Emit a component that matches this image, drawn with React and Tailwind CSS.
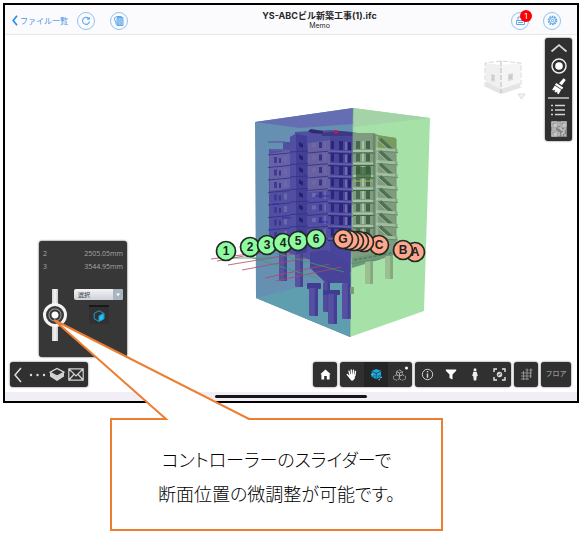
import React from "react";

const stories = [0, 1, 2, 3, 4, 5, 6, 7];

const gridMarkers = [
  { label: "1", x: 226, y: 251, color: "#8dfca0" },
  { label: "2", x: 250, y: 247, color: "#8dfca0" },
  { label: "3", x: 267, y: 245, color: "#8dfca0" },
  { label: "4", x: 283, y: 243, color: "#8dfca0" },
  { label: "5", x: 298, y: 241, color: "#8dfca0" },
  { label: "6", x: 316, y: 239, color: "#8dfca0" },
  { label: "A", x: 415, y: 252, color: "#ffa68c" },
  { label: "B", x: 403, y: 250, color: "#ffa68c" },
  { label: "C", x: 379, y: 245, color: "#ffa68c" },
  { label: "", x: 364, y: 242, color: "#ffa68c" },
  { label: "", x: 359, y: 241, color: "#ffa68c" },
  { label: "", x: 354, y: 241, color: "#ffa68c" },
  { label: "", x: 349, y: 240, color: "#ffa68c" },
  { label: "G", x: 343, y: 239, color: "#ffa68c" },
];

function Pile({ x, top, bottom, w, fill, side }) {
  return (
    <g>
      <rect x={x} y={top} width={w} height={bottom - top} rx="1.5" fill={fill} />
      <rect x={x + w * 0.65} y={top} width={w * 0.35} height={bottom - top} rx="1" fill={side} />
    </g>
  );
}

function Model() {
  return (
    <svg
      className="absolute inset-0 h-full w-full"
      viewBox="5 35 572 357"
      role="img"
      aria-label="建物モデル"
    >
      {/* section box, left face */}
      <polygon points="255,122 353,108 350,337 256,298" fill="#6690b2" />
      <polygon points="255,122 353,108 353,124 300,128" fill="#666eb3" />
      <polygon points="256,298 300,287 351,276 350,337" fill="#5f9eae" />
      {/* section box, right face */}
      <polygon points="353,108 430,118 424,311 350,337" fill="#a6e2a8" />
      <polygon points="353,108 430,118 353,127" fill="#a5d3a8" />

      {/* left wing */}
      <polygon points="283,142 290,142 290,137 295,134 295,132 331,130 353,132 351,272 330,266 285,252 269,247 269,149 283,149" fill="#504fa1" />
      <path d="M268 142h17M270 150h17M269 157h15" stroke="#5863a4" strokeWidth="1.6" />
      <polygon points="269,154 290,150 290,188 270,191" fill="#6762a8" />
      <polygon points="296,134 307,136 307,252 296,255" fill="#423f94" />
      <polygon points="308,143 330,140 331,190 308,192" fill="#67619f" />
      <polygon points="330,134 353,134 351,265 330,262" fill="#48459b" />
      <path d="M308 131l3-2 12 2v3l-12-1z" fill="#302a72" />
      <path d="M322 133l17-2 19 2v3h-36z" fill="#3d397f" />
      <circle cx="336" cy="132" r="2" fill="#b51d5c" />
      {stories.map((n) => {
        const y = 141 + n * 12.5;
        return (
          <g key={n}>
            <path d={`M268 ${y + 14}l22 -2M290 ${y + 11}l18 -1M307 ${y + 12}l24 -2`} stroke="#373187" strokeWidth="0.9" />
            <path d={`M328 ${y + 10}l25 1`} stroke="#6762aa" strokeWidth="1.4" />
            <path d={`M328 ${y + 12}l25 1`} stroke="#2b2879" strokeWidth="1" />
            <rect x="274" y={y + 16} width="3" height="6" fill="#403a92" />
            <rect x="284" y={y + 15} width="3" height="6" fill="#6c66aa" />
            <rect x="279" y={y + 17} width="2" height="5" fill="#39358b" />
            <path d={`M299 ${y + 1}l4 2v4l-4-2z`} fill="#242372" />
            <rect x="312" y={y + 2} width="4" height="4" fill="#6f67a8" />
            <rect x="319" y={y + 1} width="3" height="6" fill="#393187" />
            <rect x="324" y={y} width="2" height="8" fill="#6c66aa" />
            <rect x="331" y={y} width="3" height="8" fill="#2b2778" />
            <rect x="339" y={y} width="4" height="9" fill="#2b2778" />
            <rect x="345" y={y + 1} width="2" height="8" fill="#6f6aac" />
            <rect x="348" y={y + 1} width="3" height="8" fill="#25236f" />
          </g>
        );
      })}
      <path d="M315 196h15M318 222h10M282 218h9M272 204h7" stroke="#2e2cae" strokeWidth="1" />

      {/* right wing */}
      <polygon points="353,133 374,133 378,135 396,138 396,254 378,260 352,265" fill="#819b80" />
      <polygon points="375,135 396,138 396,149 376,149" fill="#799b5e" />
      {stories.map((n) => {
        const y = 141 + n * 12.5;
        return (
          <g key={n}>
            <rect x="356" y={y} width="4" height="8" fill="#476a55" />
            <rect x="362" y={y} width="2" height="8" fill="#a9c4a4" />
            <rect x="366" y={y} width="4" height="8" fill="#416448" />
            <path d={`M353 ${y + 10}h22`} stroke="#aac3a4" strokeWidth="2" />
            <path d={`M353 ${y + 12}h22`} stroke="#3c6544" strokeWidth="1" />
            <path d={`M380 ${y - 2}l12 11`} stroke="#4e7154" strokeWidth="3.5" />
            <path d={`M378 ${y - 1}l12 11`} stroke="#9bbc98" strokeWidth="1" />
            <path d={`M376 ${y + 8}l22 1.5`} stroke="#a2bd9e" strokeWidth="3" />
            <path d={`M376 ${y + 10}l22 1.5`} stroke="#668b69" strokeWidth="1" />
          </g>
        );
      })}
      <path d="M374 134v119" stroke="#5e826a" strokeWidth="1.5" />
      <path d="M377 136v118" stroke="#adc6ad" strokeWidth="1" />
      <path d="M396 139v112" stroke="#6f9471" strokeWidth="1" />
      <rect x="356" y="167" width="15" height="11" fill="#355e36" opacity="0.7" />
      <path d="M354 181h19" stroke="#a9b856" strokeWidth="1" />
      <polygon points="352,258 401,248 401,253 352,268" fill="#709778" />
      <path d="M354 260l38-7" stroke="#4d6e50" strokeDasharray="3 2" />

      {/* foundation */}
      <Pile x={365} top={261} bottom={284} w={8} fill="#9bbf93" side="#86a881" />
      <Pile x={385} top={256} bottom={279} w={8} fill="#9bbf93" side="#86a881" />
      <Pile x={279} top={252} bottom={281} w={8} fill="#5552a0" side="#464394" />
      <Pile x={295} top={254} bottom={287} w={8} fill="#5552a0" side="#464394" />
      <polygon points="310,252 326,250 350,263 351,283 326,283 310,268" fill="#474398" />
      <Pile x={323} top={282} bottom={312} w={7} fill="#504b9b" side="#423c8e" />
      <Pile x={342} top={283} bottom={319} w={9} fill="#5650a2" side="#443e94" />
      <rect x="307" y="283" width="14" height="6" rx="1" fill="#403c92" />
      <Pile x={309} top={288} bottom={316} w={9} fill="#5650a2" side="#443e94" />
      <rect x="323" y="290" width="17" height="5" rx="1" fill="#403c92" />
      <Pile x={328} top={294} bottom={324} w={9} fill="#5650a2" side="#443e94" />
      <rect x="350" y="287" width="4" height="7" fill="#789f78" />
      <path d="M353 108L350 337" stroke="#66869a" strokeWidth="0.6" />

      {/* grid lines */}
      <g fill="none" strokeWidth="0.8">
        <path d="M211 259l60-8M217 261l64-12M228 265l66-11M242 270l64-12M265 278l65-14M276 281l65-14" stroke="#b34564" />
        <path d="M233 258l38 0M247 256l70 22M275 253l69 19M350 264l30-5" stroke="#3f9a68" />
      </g>

      {gridMarkers.map((m) => (
        <g key={`${m.label}${m.x}`}>
          <circle cx={m.x} cy={m.y} r="9.5" fill={m.color} stroke="#202a22" strokeWidth="1.7" />
          <text
            x={m.x}
            y={m.y + 4}
            textAnchor="middle"
            className="fill-[#222222] font-['Liberation_Sans',sans-serif] text-[12px] font-bold"
          >
            {m.label}
          </text>
        </g>
      ))}
    </svg>
  );
}

function RoundButton({ label, children }) {
  return (
    <button
      type="button"
      aria-label={label}
      className="relative flex h-[18px] w-[18px] shrink-0 items-center justify-center rounded-full border border-[#8fc2ef] text-[#62a8e8]"
    >
      {children}
    </button>
  );
}

function Header() {
  return (
    <header className="flex h-[30px] items-center border-b border-[#e7e7ea] bg-[#fbfbfd] pt-[2px] pr-4 pl-[7px]">
      <a href="#files" className="flex items-center gap-[2px] text-[8px] leading-3 whitespace-nowrap text-[#4596e6]">
        <svg width="6" height="11" viewBox="0 0 6 11" fill="none" stroke="#2b8cee" strokeWidth="1.7">
          <path d="M5 0.8L1.2 5.5 5 10.2" />
        </svg>
        ファイル一覧
      </a>
      <div className="ml-[9px] flex gap-[15px]">
        <RoundButton label="再読み込み">
          <svg width="10" height="10" viewBox="0 0 10 10" fill="none" stroke="currentColor" strokeWidth="1.1">
            <path d="M7.7 2.6A3.5 3.5 0 1 0 8.5 5.4M8.3 0.9v2.3H6" />
          </svg>
        </RoundButton>
        <RoundButton label="図面">
          <svg width="12" height="12" viewBox="0 0 12 12" fill="none" stroke="currentColor">
            <path d="M4 2.5h6v8H4z" fill="#b4d7f6" />
            <path d="M3.5 9.8L1.2 3.2 3.5 1.5h5.2M5.8 3v7M8 3v7" />
          </svg>
        </RoundButton>
      </div>
      <div className="flex-1 text-center text-[#272729]">
        <h1 className="text-[9px] leading-[11px] font-bold">YS-ABCビル新築工事(1).ifc</h1>
        <p className="text-[7px] leading-[10px]">Memo</p>
      </div>
      <div className="flex gap-[14px]">
        <RoundButton label="通知 1件">
          <svg width="11" height="11" viewBox="0 0 11 11" fill="none" stroke="currentColor">
            <path d="M1.5 5.5h8v4h-8zM3 5V2h5v3M3 7.5h5" />
          </svg>
          <span className="absolute -top-[3px] left-[8px] flex h-[12px] w-[12px] items-center justify-center rounded-full bg-[#fb0007] text-[8px] leading-none text-white">
            1
          </span>
        </RoundButton>
        <RoundButton label="設定">
          <svg width="11" height="11" viewBox="0 0 11 11" fill="none" stroke="currentColor">
            <circle cx="5.5" cy="5.5" r="4" strokeWidth="1.6" strokeDasharray="1.7 0.8" />
            <circle cx="5.5" cy="5.5" r="3" />
            <circle cx="5.5" cy="5.5" r="1.2" />
          </svg>
        </RoundButton>
      </div>
    </header>
  );
}

function ViewCube() {
  return (
    <svg className="mt-[22px]" width="42" height="42" viewBox="0 0 42 42" role="img" aria-label="ビューキューブ">
      <path d="M1 3l16 2v29L2 27z" fill="#f0f0f0" />
      <path d="M17 5l20-2-1 25-19 6z" fill="#f5f5f5" />
      <path d="M2 22l15 7v5L2 27zM17 29l19-6v5l-19 6z" fill="#e4e4e4" />
      <g fill="none" stroke="#d8d8d8" strokeDasharray="5 2">
        <path d="M1 27V3l16-2 20 2v25" />
        <path d="M17 1v32" stroke="#bcbcbc" />
      </g>
      <path d="M7 14l4 1v7l-4-1zM24 14l5-1v7l-5 1z" fill="#d6dade" />
      <path d="M8 16h2M8 19h2M25 16h3M25 18h3" stroke="#b9bec4" />
      <path d="M34 34h7l-3.5 5z" fill="#f2f2f2" stroke="#dcdcdc" />
    </svg>
  );
}

const barStyle = "rounded-[3px] bg-[#303030] shadow-[0_0_2px_#555555]";

function SideTools() {
  return (
    <nav className={`flex w-[27px] flex-col items-center pt-[1px] pb-[3px] text-white ${barStyle}`} aria-label="表示ツール">
      <button type="button" aria-label="閉じる" className="flex h-[17px] items-center">
        <svg width="18" height="10" viewBox="0 0 18 10" fill="none" stroke="#d8d8d8" strokeWidth="1.7">
          <path d="M1.5 8.5L9 2l7.5 6.5" />
        </svg>
      </button>
      <button type="button" aria-label="記録" className="flex h-5 items-center">
        <svg width="18" height="18" viewBox="0 0 18 18" fill="none" stroke="#ededed">
          <circle cx="9" cy="9" r="7" strokeWidth="1.5" />
          <circle cx="9" cy="9" r="3.8" fill="#fff" stroke="none" />
        </svg>
      </button>
      <button type="button" aria-label="クリア" className="flex h-5 items-center">
        <svg width="16" height="18" viewBox="0 0 16 18" fill="#fff">
          <path d="M12.6 1.2l2.2 1.8-4 5.2L8 6.2zM5.2 6l7 4.6-1.2 1.8-7-4.6zM3.8 8.6l6.4 4.2L7.6 17.2l-1.6-1 .4-1.8-1.8 1-1.2-.8 1.2-1.8-2.2.8-1.2-.9z" />
        </svg>
      </button>
      <hr className="my-[1px] w-[21px] border-t-2 border-[#a4a4a4]" />
      <button type="button" aria-label="一覧" className="flex h-5 items-center">
        <svg width="15" height="12" viewBox="0 0 15 12" stroke="#d4d4d4" strokeWidth="1.4">
          <path d="M0 1.5h2M4 1.5h10M0 6h2M4 6h10M0 10.5h2M4 10.5h10" />
        </svg>
      </button>
      <button type="button" aria-label="QRコード" className="flex h-[18px] items-center">
        <svg width="16" height="16" viewBox="0 0 16 16">
          <path d="M0 0h16v16H0z" fill="#858585" />
          <path d="M1 1h5v5H1zM10 1h5v5h-5zM1 10h5v5H1z" fill="none" stroke="#cdcdcd" />
          <path d="M3 3h2v2H3zM12 3h2v2h-2zM3 12h2v2H3zM8 1v4M7 7h3v2h3v3h-2v3M13 8h2M8 11v4M1 8h4M13 14h2" fill="none" stroke="#dedede" />
        </svg>
      </button>
    </nav>
  );
}

function SectionPanel() {
  return (
    <section className="ml-[29px] w-[88px] rounded-[3px] bg-[#373737] px-1 pt-[6px] shadow-[0_0_2px_#333333]" aria-label="断面コントローラー">
      <dl className="font-['Open_Sans','Noto_Sans_CJK_JP',sans-serif] text-[7px] leading-[13px] text-[#a6a6a6]">
        <div className="flex justify-between">
          <dt>2</dt>
          <dd>2505.05mm</dd>
        </div>
        <div className="flex justify-between">
          <dt>3</dt>
          <dd>3544.95mm</dd>
        </div>
      </dl>
      <div className="flex h-[84px] items-start justify-between pt-[16px]">
        <input
          type="range"
          min="0"
          max="100"
          defaultValue="50"
          aria-label="断面位置"
          className="h-[52px] w-[24px] appearance-none bg-transparent [writing-mode:vertical-lr] [&::-webkit-slider-runnable-track]:h-full [&::-webkit-slider-runnable-track]:w-full [&::-webkit-slider-runnable-track]:bg-[linear-gradient(90deg,transparent_9px,#d2d2d2_9px,#f4f4f4_12px,#c9c9c9_15px,transparent_15px)] [&::-webkit-slider-thumb]:h-[24px] [&::-webkit-slider-thumb]:w-[24px] [&::-webkit-slider-thumb]:appearance-none [&::-webkit-slider-thumb]:rounded-full [&::-webkit-slider-thumb]:border-[3px] [&::-webkit-slider-thumb]:border-[#f4f4f4] [&::-webkit-slider-thumb]:bg-[radial-gradient(circle,#ffffff_3px,#373737_4px,#373737_5px,#9b9b9b_6px,#373737_7px)]"
        />
        <div className="flex flex-col items-center gap-[5px]">
          <div className="relative flex">
            <select
              aria-label="選択"
              className="h-[11px] w-[49px] appearance-none rounded-[2px] bg-linear-to-b from-[#f4f4f5] to-[#ced1d8] pl-[4px] text-[6px] leading-[11px] text-[#333333]"
            >
              <option>選択</option>
            </select>
            <svg className="pointer-events-none absolute top-0 right-0" width="10" height="11" viewBox="0 0 10 11">
              <path d="M0 0h8a2 2 0 0 1 2 2v7a2 2 0 0 1-2 2H0z" fill="#a9b4c1" />
              <path d="M3 4.5h4L5 7.2z" fill="#fff" />
            </svg>
          </div>
          <button type="button" aria-label="断面キューブ" className="flex h-[19px] w-5 items-center justify-center border-t-2 border-[#181818] bg-[#313131]">
            <svg width="12" height="12" viewBox="0 0 12 12" fill="none" stroke="#209ed0">
              <path d="M6 .8l4.8 2.6v5.4L6 11.3 1.2 8.8V3.4z" />
              <path d="M6 6l4.8-2.6v5.4L6 11.3z" fill="#1cc4fc" />
            </svg>
          </button>
        </div>
      </div>
    </section>
  );
}

function LeftBar() {
  return (
    <nav className={`flex h-[25px] w-[78px] items-center gap-[3px] pl-[3px] ${barStyle}`} aria-label="メモツール">
      <button type="button" aria-label="戻る">
        <svg width="10" height="18" viewBox="0 0 10 18" fill="none" stroke="#ddd" strokeWidth="1.5">
          <path d="M8 2L2 9l6 7" />
        </svg>
      </button>
      <button type="button" aria-label="その他" className="ml-[3px]">
        <svg width="17" height="4" viewBox="0 0 17 4" fill="#ddd">
          <circle cx="2" cy="2" r="1.2" />
          <circle cx="8.5" cy="2" r="1.2" />
          <circle cx="15" cy="2" r="1.2" />
        </svg>
      </button>
      <button type="button" aria-label="レイヤー">
        <svg width="16" height="15" viewBox="0 0 16 15">
          <path d="M1 5.5l7 4 7-4v4l-7 4.5-7-4.5z" fill="#d3d3d3" />
          <path d="M1 5.2L8 1.5l7 3.7-7 3.8z" fill="#303030" stroke="#ddd" strokeWidth="1.2" />
        </svg>
      </button>
      <button type="button" aria-label="メール">
        <svg width="16" height="13" viewBox="0 0 16 13" fill="none" stroke="#d4d4d4" strokeWidth="1.2">
          <path d="M.8 .8h14.4v11.4H.8zM1 1l7 7 7-7M1 12l4.8-5.5M15 12l-4.8-5.5" />
        </svg>
      </button>
    </nav>
  );
}

function Tool({ label, active, children }) {
  return (
    <button
      type="button"
      aria-label={label}
      className={`flex h-full w-6 items-center justify-center ${active ? "bg-[#252525]" : ""}`}
    >
      {children}
    </button>
  );
}

function BottomTools() {
  return (
    <nav className="flex h-[25px] gap-[3px]" aria-label="操作ツール">
      <div className={`flex ${barStyle}`}>
        <Tool label="ホーム">
          <svg width="11" height="11" viewBox="0 0 11 11" fill="#fff">
            <path d="M5.5.5L10.7 5.2H9.6v5.3H6.8V7H4.2v3.5H1.4V5.2H.3z" />
          </svg>
        </Tool>
      </div>
      <div className={`flex ${barStyle}`}>
        <Tool label="移動">
          <svg width="12" height="12" viewBox="0 0 12 12" fill="#fff" stroke="#fff" strokeLinecap="round" strokeWidth="1.4">
            <path d="M3 2.2l1.2 4M5.2 1l.6 5M7.5 1.2l-.2 5M9.5 2.5l-.6 4M1.3 5.5l2.5 2.8" />
            <path d="M3.8 5.8h5l-.3 3.4-1.4 2H5.3L3.3 8.5z" strokeWidth=".6" />
          </svg>
        </Tool>
        <Tool label="断面" active>
          <svg width="13" height="13" viewBox="0 0 13 13" fill="none">
            <path d="M6.2 1l5 1.7-.5 6-4.6 2.5L1.5 8.5l.2-5.6z" fill="#1da9dc" />
            <path d="M1.7 3.4l4.6 2 4.9-2.3M6.3 5l-.2 6" stroke="#203e4c" strokeWidth=".8" />
            <path d="M3 8.8l1.5-1.5M8 8.5l1.5-1" stroke="#203e4c" />
            <path d="M1 7l2-1M10 10l2-1M8.5 12l1.5-1" stroke="#36c2f1" strokeWidth="1.3" />
          </svg>
        </Tool>
        <Tool label="分解">
          <svg width="17" height="17" viewBox="0 0 17 17" fill="none" stroke="#aaa">
            <path d="M7.5 4l3 1.6v3l-3 1.4-3-1.4v-3zM4.5 8.8l2.8 1.5v2.6l-2.8 1.3-3-1.3v-2.6zM10.5 8.8l3 1.5v2.6l-3 1.3-3-1.3v-2.6z" strokeDasharray="2 .7" />
            <path d="M4.5 5.6l3 1.4 3-1.4M7.5 7v3" />
            <circle cx="14.5" cy="2" r="1.5" fill="#fff" stroke="none" />
          </svg>
        </Tool>
      </div>
      <div className={`flex ${barStyle}`}>
        <Tool label="情報">
          <svg width="13" height="13" viewBox="0 0 13 13" fill="none" stroke="#d0d0d0">
            <circle cx="6.5" cy="6.5" r="5.2" />
            <path d="M6.5 5.5v4.2M6.5 3v1.3" strokeWidth="1.5" />
          </svg>
        </Tool>
        <Tool label="フィルター">
          <svg width="12" height="11" viewBox="0 0 12 11" fill="#fff">
            <path d="M.8.5h10.4v1.2L7.5 5.5v5L4.5 9V5.5L.8 1.7z" />
          </svg>
        </Tool>
        <Tool label="歩行">
          <svg width="8" height="13" viewBox="0 0 8 13" fill="#eee">
            <circle cx="4" cy="1.8" r="1.5" />
            <path d="M2.3 3.7h3.4L6.8 8h-1l-.6 4.5H2.8L2.2 8h-1z" />
          </svg>
        </Tool>
        <Tool label="フォーカス">
          <svg width="13" height="13" viewBox="0 0 13 13" fill="none" stroke="#e5e5e5" strokeWidth="1.4">
            <path d="M1 4V1h3M9 1h3v3M12 9v3H9M4 12H1V9" />
            <circle cx="6.5" cy="6.5" r="2.7" fill="#ddd" stroke="none" />
            <path d="M5 7.5l2.8-2" stroke="#666" />
          </svg>
        </Tool>
      </div>
      <div className={`flex ${barStyle}`}>
        <Tool label="通り芯">
          <svg width="13" height="13" viewBox="0 0 13 13" fill="none" stroke="#8e8e8e">
            <path d="M3.5 3v9M7 3v9M10.5 1v9M1 5h11M1 8h11M1 11h8" />
            <circle cx="7" cy="2" r="1" />
            <circle cx="11" cy="2" r="1" />
          </svg>
        </Tool>
      </div>
      <button type="button" className={`w-[30px] text-[7px] text-[#b4b4b4] ${barStyle}`}>
        フロア
      </button>
    </nav>
  );
}

function Callout() {
  return (
    <aside className="relative mt-[15px] ml-[107px] w-fit min-w-[333px] border-2 border-[#ed7d31] bg-white px-5 pt-[22px] pb-[19px] text-center">
      <svg className="absolute -top-[102px] -left-[62px]" width="205" height="104" viewBox="50 318 205 104" aria-hidden="true">
        <path d="M54 320L166 419 168 421H245L249 419Z" fill="#fff" />
        <path d="M165 419h1L54 320l195 99h1" fill="none" stroke="#ed7d31" strokeWidth="2" />
      </svg>
      <p className="relative font-['Noto_Sans_CJK_JP',sans-serif] text-[18px] leading-[34px] font-light text-black [font-feature-settings:'palt']">
        コントローラーのスライダーで
        <br />
        断面位置の微調整が可能です。
      </p>
    </aside>
  );
}

export default function App() {
  return (
    <div className="bg-white pt-[3px] pr-[2px] pl-[3px] font-['Inter','Noto_Sans_CJK_JP',sans-serif]">
      <div className="border-2 border-black bg-white">
        <Header />
        <main className="relative flex min-h-[357px] flex-col justify-between">
          <Model />
          <div className="relative flex items-start justify-end gap-[19px] pt-[3px] pr-[5px]">
            <ViewCube />
            <SideTools />
          </div>
          <div className="relative flex items-end justify-between pr-[6px] pb-[5px] pl-[5px]">
            <div className="flex flex-col gap-[5px]">
              <SectionPanel />
              <LeftBar />
            </div>
            <BottomTools />
          </div>
        </main>
        <footer className="flex h-[9px] items-center justify-center bg-[#f1eff5]">
          <div className="h-[3px] w-[152px] rounded-full bg-[#17151a]" />
        </footer>
      </div>
      <Callout />
    </div>
  );
}
